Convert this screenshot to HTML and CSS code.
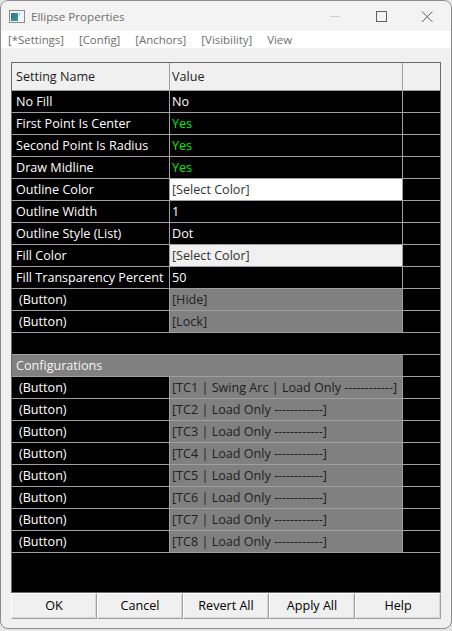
FILE: index.html
```html
<!DOCTYPE html>
<html>
<head>
<meta charset="utf-8">
<link rel="stylesheet" href="styles.css">
</head>
<body>
<div class="window">
  <div class="titlebar">
    <svg class="appicon" width="16" height="13" viewBox="0 0 16 13">
      <rect x="0.5" y="0.5" width="15" height="12" fill="#f4f4f4" stroke="#8a8a8a"/>
      <rect x="2" y="3" width="7" height="8" fill="url(#g)"/>
      <rect x="10" y="3" width="1" height="3" fill="#9ec3e6"/>
      <defs>
        <linearGradient id="g" x1="0" y1="0" x2="1" y2="1">
          <stop offset="0" stop-color="#2f6fb0"/>
          <stop offset="1" stop-color="#3aa07a"/>
        </linearGradient>
      </defs>
    </svg>
    <span class="title">Ellipse Properties</span>
    <div class="controls">
      <svg class="ctl" width="46" height="30" viewBox="0 0 46 30"><line x1="18" y1="15.5" x2="28" y2="15.5" stroke="#cfcfcf" stroke-width="1"/></svg>
      <svg class="ctl" width="46" height="30" viewBox="0 0 46 30"><rect x="18.5" y="10.5" width="10" height="10" fill="none" stroke="#5f5f5f" stroke-width="1"/></svg>
      <svg class="ctl" width="46" height="30" viewBox="0 0 46 30"><path d="M18 10.5 L28.5 21 M28.5 10.5 L18 21" stroke="#5f5f5f" stroke-width="1" fill="none"/></svg>
    </div>
  </div>
  <div class="menubar">
    <span class="mi">[*Settings]</span>
    <span class="mi">[Config]</span>
    <span class="mi">[Anchors]</span>
    <span class="mi">[Visibility]</span>
    <span class="mi">View</span>
  </div>
  <div class="content">
    <div class="grid">
      <div class="row head"><div class="c1">Setting Name</div><div class="c2">Value</div><div class="c3"></div></div>
      <div class="row"><div class="c1">No Fill</div><div class="c2">No</div><div class="c3"></div></div>
      <div class="row"><div class="c1">First Point Is Center</div><div class="c2 yes">Yes</div><div class="c3"></div></div>
      <div class="row"><div class="c1">Second Point Is Radius</div><div class="c2 yes">Yes</div><div class="c3"></div></div>
      <div class="row"><div class="c1">Draw Midline</div><div class="c2 yes">Yes</div><div class="c3"></div></div>
      <div class="row"><div class="c1">Outline Color</div><div class="c2 white">[Select Color]</div><div class="c3"></div></div>
      <div class="row"><div class="c1">Outline Width</div><div class="c2">1</div><div class="c3"></div></div>
      <div class="row"><div class="c1">Outline Style (List)</div><div class="c2">Dot</div><div class="c3"></div></div>
      <div class="row"><div class="c1">Fill Color</div><div class="c2 light">[Select Color]</div><div class="c3"></div></div>
      <div class="row"><div class="c1">Fill Transparency Percent</div><div class="c2">50</div><div class="c3"></div></div>
      <div class="row"><div class="c1 btn">(Button)</div><div class="c2 gray">[Hide]</div><div class="c3"></div></div>
      <div class="row"><div class="c1 btn">(Button)</div><div class="c2 gray">[Lock]</div><div class="c3"></div></div>
      <div class="row"><div class="full"></div></div>
      <div class="row"><div class="section">Configurations</div><div class="c3"></div></div>
      <div class="row"><div class="c1 btn">(Button)</div><div class="c2 gray">[TC1 | Swing Arc | Load Only ------------]</div><div class="c3"></div></div>
      <div class="row"><div class="c1 btn">(Button)</div><div class="c2 gray">[TC2 | Load Only ------------]</div><div class="c3"></div></div>
      <div class="row"><div class="c1 btn">(Button)</div><div class="c2 gray">[TC3 | Load Only ------------]</div><div class="c3"></div></div>
      <div class="row"><div class="c1 btn">(Button)</div><div class="c2 gray">[TC4 | Load Only ------------]</div><div class="c3"></div></div>
      <div class="row"><div class="c1 btn">(Button)</div><div class="c2 gray">[TC5 | Load Only ------------]</div><div class="c3"></div></div>
      <div class="row"><div class="c1 btn">(Button)</div><div class="c2 gray">[TC6 | Load Only ------------]</div><div class="c3"></div></div>
      <div class="row"><div class="c1 btn">(Button)</div><div class="c2 gray">[TC7 | Load Only ------------]</div><div class="c3"></div></div>
      <div class="row"><div class="c1 btn">(Button)</div><div class="c2 gray">[TC8 | Load Only ------------]</div><div class="c3"></div></div>
    </div>
    <div class="buttons">
      <div class="button">OK</div>
      <div class="button">Cancel</div>
      <div class="button">Revert All</div>
      <div class="button">Apply All</div>
      <div class="button">Help</div>
    </div>
  </div>
</div>
</body>
</html>
```
FILE: styles.css
```css
html, body {
  margin: 0;
  padding: 0;
  background: #e6e6e6;
}
.window {
  box-sizing: border-box;
  width: 452px;
  height: 629px;
  border: 1px solid #8c8c8c;
  border-radius: 8px;
  background: #f0f0f0;
  overflow: hidden;
  font-family: "Open Sans", "Noto Sans", sans-serif;
  font-size: 12.6px;
}
.titlebar {
  height: 30px;
  background: #f3f3f3;
  display: flex;
  align-items: center;
}
.appicon {
  margin-left: 8px;
  margin-right: 6px;
}
.title {
  color: #6e6e6e;
  font-size: 11.6px;
  flex: 1;
}
.controls {
  display: flex;
  align-items: center;
  margin-right: 1px;
}
.ctl {
  display: block;
}
.menubar {
  height: 17px;
  background: #ffffff;
  display: flex;
  align-items: center;
  padding-left: 7px;
  gap: 15px;
}
.mi {
  color: #6e6e6e;
  font-size: 11.4px;
  line-height: 17px;
  white-space: nowrap;
}
.content {
  padding: 14px 10px 0 10px;
}
.grid {
  box-sizing: border-box;
  height: 531px;
  border: 1px solid #6a6a6a;
  background: #000000;
}
.row {
  display: flex;
  box-sizing: border-box;
  height: 22px;
  border-bottom: 1px solid #a0a0a0;
  color: #ffffff;
  line-height: 21px;
}
.row.head {
  height: 28px;
  line-height: 27px;
  background: #f0f0f0;
  color: #1e1e1e;
}
.c1 {
  box-sizing: border-box;
  width: 158px;
  border-right: 1px solid #a0a0a0;
  padding-left: 4px;
  white-space: nowrap;
  overflow: hidden;
}
.c1.btn {
  padding-left: 7px;
}
.c2 {
  box-sizing: border-box;
  width: 233px;
  border-right: 1px solid #a0a0a0;
  padding-left: 2px;
  white-space: nowrap;
  overflow: hidden;
}
.c3 {
  flex: 1;
}
.yes {
  color: #00ee00;
}
.white {
  background: #ffffff;
  color: #333333;
}
.light {
  background: #f0f0f0;
  color: #333333;
}
.gray {
  background: #808080;
  color: #202020;
}
.full {
  flex: 1;
}
.section {
  box-sizing: border-box;
  width: 391px;
  background: #808080;
  color: #f4f4f4;
  padding-left: 4px;
  border-right: 1px solid #808080;
}
.buttons {
  display: flex;
}
.button {
  box-sizing: border-box;
  width: 86px;
  height: 26px;
  border: 1px solid #a0a0a0;
  border-top-color: #ffffff;
  border-left-color: #ffffff;
  box-shadow: inset -1px -1px 0 #d6d6d6;
  background: #f0f0f0;
  color: #000000;
  text-align: center;
  line-height: 24px;
  font-size: 12.6px;
}
```
